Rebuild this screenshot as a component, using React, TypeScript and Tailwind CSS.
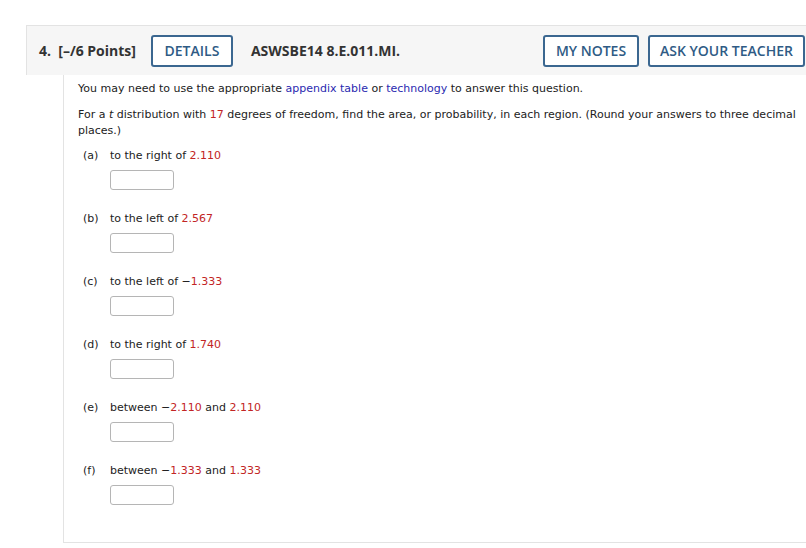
import React from "react";

const parts = [
  { key: "a", text: "to the right of", values: ["2.110"] },
  { key: "b", text: "to the left of", values: ["2.567"] },
  { key: "c", text: "to the left of", values: ["\u22121.333"] },
  { key: "d", text: "to the right of", values: ["1.740"] },
  { key: "e", text: "between", values: ["\u22122.110", "2.110"] },
  { key: "f", text: "between", values: ["\u22121.333", "1.333"] },
];

function Value({ v }: { v: string }) {
  // the minus sign stays black, the number is red
  if (v.startsWith("\u2212")) {
    return (
      <>
        {"\u2212"}
        <span className="text-[#c22525]">{v.slice(1)}</span>
      </>
    );
  }
  return <span className="text-[#c22525]">{v}</span>;
}

export default function App() {
  return (
    <div className="min-h-[548px] bg-white pt-[25px] text-[#222]">
      {/* header */}
      <div className="ml-[26px] flex h-[50px] items-center border-l border-t border-[#e3e3e3] bg-[#f6f6f6] pl-[12px] font-['Open_Sans',sans-serif]">
        <span className="text-[14px] font-bold text-[#333]">4.&nbsp; [–/6 Points]</span>
        <button className="ml-[15px] h-[32px] w-[82px] rounded-[3px] border-2 border-[#3b6790] bg-white text-[14px] font-semibold text-[#2f5b85]">
          DETAILS
        </button>
        <span className="ml-[18px] text-[14px] font-bold text-[#333]">ASWSBE14 8.E.011.MI.</span>
        <div className="ml-auto flex gap-[9px] pr-[1px]">
          <button className="h-[32px] w-[96px] rounded-[3px] border-2 border-[#3b6790] bg-white text-[14px] font-semibold text-[#2f5b85]">
            MY NOTES
          </button>
          <button className="h-[32px] w-[157px] rounded-[3px] border-2 border-[#3b6790] bg-white text-[14px] font-semibold text-[#2f5b85]">
            ASK YOUR TEACHER
          </button>
        </div>
      </div>

      {/* question body */}
      <div className="ml-[63px] h-[468px] border-b border-l border-[#e3e3e3] pl-[14px] pt-[6px] font-['DejaVu_Sans',Verdana,sans-serif] text-[11px] leading-[16px]">
        <p>
          You may need to use the appropriate{" "}
          <span className="text-[#2a2ab0]">appendix table</span> or{" "}
          <span className="text-[#2a2ab0]">technology</span> to answer this question.
        </p>
        <p className="mt-[10px]">
          For a <i>t</i> distribution with <span className="text-[#c22525]">17</span> degrees of freedom, find
          the area, or probability, in each region. (Round your answers to three decimal places.)
        </p>

        <div className="mt-[9px] flex flex-col gap-[21px]">
          {parts.map((p) => (
            <div key={p.key} className="pl-[5px]">
              <div className="flex">
                <span className="w-[27px]">({p.key})</span>
                <span>
                  {p.text} <Value v={p.values[0]} />
                  {p.values[1] && (
                    <>
                      {" "}and <Value v={p.values[1]} />
                    </>
                  )}
                </span>
              </div>
              <div className="ml-[27px] mt-[6px] h-[20px] w-[64px] rounded-[3px] border border-[#b5b5b5] bg-white" />
            </div>
          ))}
        </div>
      </div>
    </div>
  );
}
